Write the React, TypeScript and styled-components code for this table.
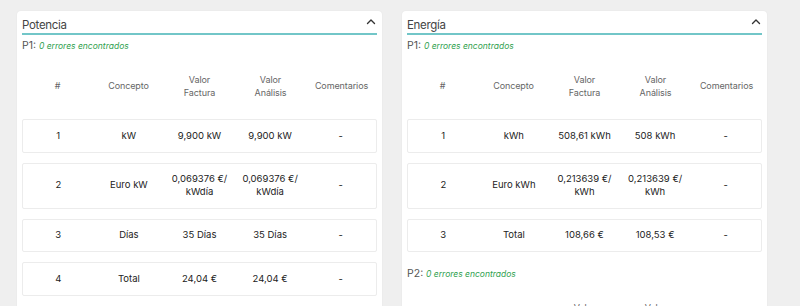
import React from "react";
import styled, { createGlobalStyle } from "styled-components";

const Global = createGlobalStyle`
  html, body { margin: 0; padding: 0; background: #efefef; }
  body { font-family: Inter, "Noto Sans", sans-serif; -webkit-font-smoothing: antialiased; }
`;

const Page = styled.div`
  display: flex;
  gap: 20px;
  padding: 11px 0 0 17px;
  align-items: flex-start;
`;

const Card = styled.section`
  width: 365px;
  box-sizing: border-box;
  background: #fff;
  border-radius: 4px;
  box-shadow: 0 0 2px rgba(0, 0, 0, 0.06);
  padding: 0 5px 20px;
`;

const TitleBar = styled.div`
  display: flex;
  align-items: center;
  justify-content: space-between;
  padding-top: 6px;
  height: 16px;
  border-bottom: 2px solid #72c6c8;
`;

const Title = styled.h2`
  margin: 0;
  font-size: 11.5px;
  letter-spacing: -0.3px;
  font-weight: 400;
  color: #444;
  line-height: 16px;
`;

const Chevron = styled.svg`
  width: 10px;
  height: 10px;
  margin-right: 1px;
  margin-top: -6px;
`;

const Period = styled.div<{ $first?: boolean }>`
  margin-top: ${(p) => (p.$first ? "3px" : "14px")};
  height: 16px;
  line-height: 16px;
  font-size: 10.5px;
  color: #555;
`;

const Ok = styled.span`
  font-style: italic;
  font-size: 8.5px;
  color: #2fa14f;
`;

const Grid = styled.div`
  display: grid;
  grid-template-columns: repeat(5, 1fr);
  align-items: center;
  text-align: center;
`;

const Head = styled(Grid)`
  padding: 20px 0;
  font-size: 9px;
  letter-spacing: -0.1px;
  line-height: 12.5px;
  color: #666;
`;

const Rows = styled.div`
  display: flex;
  flex-direction: column;
  gap: 10px;
`;

const Row = styled(Grid)`
  border: 1px solid #ececec;
  border-radius: 2px;
  padding: 9.5px 0;
  font-size: 9.5px;
  line-height: 12.5px;
  color: #222;
`;

type R = [string, string, string, string, string];

const Table = ({ rows }: { rows: R[] }) => (
  <>
    <Head>
      <div>#</div>
      <div>Concepto</div>
      <div>
        Valor
        <br />
        Factura
      </div>
      <div>
        Valor
        <br />
        Análisis
      </div>
      <div>Comentarios</div>
    </Head>
    <Rows>
      {rows.map((r, i) => (
        <Row key={i}>
          {r.map((c, j) => (
            <div key={j}>{c.split("\n").map((l, k) => (k ? [<br key={k} />, l] : l))}</div>
          ))}
        </Row>
      ))}
    </Rows>
  </>
);

const Up = () => (
  <Chevron viewBox="0 0 10 10">
    <path d="M1.5 6.5 L5 3 L8.5 6.5" fill="none" stroke="#333" strokeWidth="1.4" strokeLinecap="round" strokeLinejoin="round" />
  </Chevron>
);

const Status = ({ p, first }: { p: string; first?: boolean }) => (
  <Period $first={first}>
    {p}: <Ok>0 errores encontrados</Ok>
  </Period>
);

export default function App() {
  return (
    <>
      <Global />
      <Page>
        <Card>
          <TitleBar>
            <Title>Potencia</Title>
            <Up />
          </TitleBar>
          <Status p="P1" first />
          <Table
            rows={[
              ["1", "kW", "9,900 kW", "9,900 kW", "-"],
              ["2", "Euro kW", "0,069376 €/\nkWdía", "0,069376 €/\nkWdía", "-"],
              ["3", "Días", "35 Días", "35 Días", "-"],
              ["4", "Total", "24,04 €", "24,04 €", "-"],
            ]}
          />
        </Card>
        <Card>
          <TitleBar>
            <Title>Energía</Title>
            <Up />
          </TitleBar>
          <Status p="P1" first />
          <Table
            rows={[
              ["1", "kWh", "508,61 kWh", "508 kWh", "-"],
              ["2", "Euro kWh", "0,213639 €/\nkWh", "0,213639 €/\nkWh", "-"],
              ["3", "Total", "108,66 €", "108,53 €", "-"],
            ]}
          />
          <Status p="P2" />
          <Table
            rows={[
              ["1", "kWh", "0 kWh", "0 kWh", "-"],
            ]}
          />
        </Card>
      </Page>
    </>
  );
}
